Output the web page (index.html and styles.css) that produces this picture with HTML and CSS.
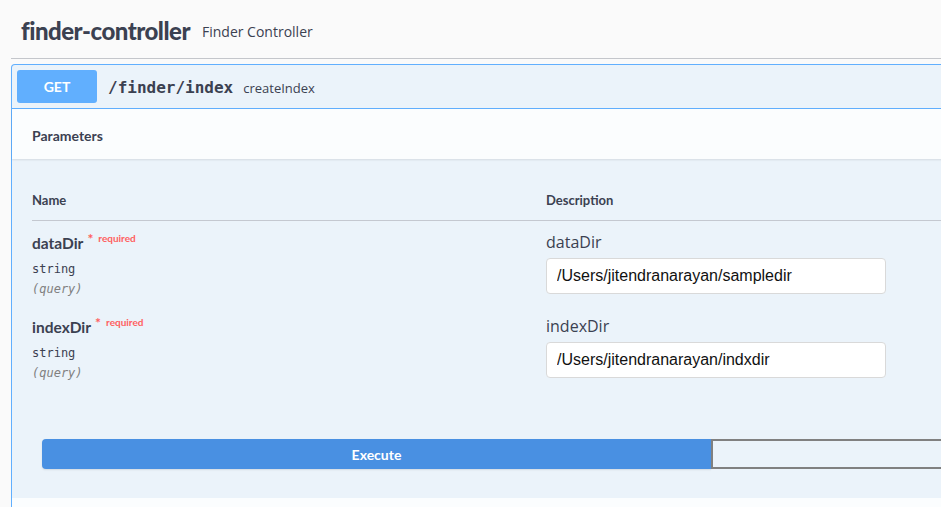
FILE: index.html
```html
<!DOCTYPE html>
<html>
<head>
<meta charset="utf-8">
<link rel="stylesheet" href="styles.css">
</head>
<body>
<div class="page">
  <div class="tag">
    <h4 class="tag-title">finder-controller</h4>
    <span class="tag-desc">Finder Controller</span>
  </div>
  <div class="opblock">
    <div class="summary">
      <span class="method">GET</span>
      <span class="path">/finder/index</span>
      <span class="op-desc">createIndex</span>
    </div>
    <div class="section-header">
      <h4 class="section-title">Parameters</h4>
    </div>
    <div class="params">
      <div class="params-head">
        <div class="col-name">Name</div>
        <div class="col-desc">Description</div>
      </div>
      <div class="param-row">
        <div class="col-name">
          <div class="param-name">dataDir<span class="req"><span class="star">*</span>required</span></div>
          <div class="param-type">string</div>
          <div class="param-in">(query)</div>
        </div>
        <div class="col-desc">
          <div class="param-label">dataDir</div>
          <input class="param-input" type="text" value="/Users/jitendranarayan/sampledir">
        </div>
      </div>
      <div class="param-row">
        <div class="col-name">
          <div class="param-name">indexDir<span class="req"><span class="star">*</span>required</span></div>
          <div class="param-type">string</div>
          <div class="param-in">(query)</div>
        </div>
        <div class="col-desc">
          <div class="param-label">indexDir</div>
          <input class="param-input" type="text" value="/Users/jitendranarayan/indxdir">
        </div>
      </div>
    </div>
    <div class="execute-wrapper">
      <button class="btn-execute">Execute</button>
      <button class="btn-clear"></button>
    </div>
    <div class="section-header next"></div>
  </div>
</div>
</body>
</html>
```

FILE: styles.css
```css
html, body {
  margin: 0;
  padding: 0;
  overflow: hidden;
  background: #fafafa;
}
body {
  width: 941px;
  height: 507px;
  font-family: "Open Sans", sans-serif;
  color: #3b4151;
}
.page {
  width: 1420px;
  padding-left: 11px;
}
.tag {
  display: flex;
  align-items: center;
  height: 58px;
  border-bottom: 1px solid #c4c6cb;
  padding-left: 10px;
  box-sizing: content-box;
  margin-bottom: 5px;
}
.tag-title {
  margin: 0;
  font-family: "Lato", sans-serif;
  font-weight: 900;
  font-size: 24px;
  letter-spacing: -0.5px;
  line-height: 30px;
  margin-top: 4px;
  color: #3b4151;
}
.tag-desc {
  font-size: 14px;
  margin-left: 12px;
  margin-top: 4px;
}
.opblock {
  border: 1px solid #61affe;
  border-radius: 4px;
  background: #ebf3fa;
  border-bottom: none;
}
.summary {
  display: flex;
  align-items: center;
  padding: 5px;
  height: 33px;
  border-bottom: 1px solid #61affe;
}
.method {
  width: 80px;
  height: 33px;
  line-height: 33px;
  text-align: center;
  background: #61affe;
  color: #fff;
  border-radius: 3px;
  font-family: "Lato", sans-serif;
  font-weight: 700;
  font-size: 14px;
}
.path {
  font-family: "DejaVu Sans Mono", monospace;
  font-weight: 600;
  font-size: 16px;
  margin-left: 11px;
  margin-top: 2px;
  color: #3b4151;
}
.op-desc {
  font-size: 13px;
  margin-left: 10px;
  margin-top: 2px;
}
.section-header {
  height: 50px;
  display: flex;
  align-items: center;
  padding: 0 20px;
  background: rgba(255, 255, 255, 0.8);
  box-shadow: 0 1px 2px rgba(0, 0, 0, 0.1);
}
.section-title {
  margin: 0;
  font-family: "Lato", sans-serif;
  font-size: 14px;
  font-weight: 700;
  margin-top: 2px;
}
.params {
  padding: 20px 0 0 20px;
}
.params-head {
  display: flex;
  height: 41px;
  align-items: center;
  border-bottom: 1px solid #c4c8d0;
  font-family: "Lato", sans-serif;
  font-weight: 700;
  font-size: 13px;
}
.col-name {
  width: 514px;
  flex: none;
}
.col-desc {
  flex: 1;
}
.param-row {
  display: flex;
  height: 84px;
  padding-top: 11px;
  box-sizing: border-box;
}
.param-row .col-name {
  padding-top: 1px;
}
.param-name {
  font-family: "Lato", sans-serif;
  font-weight: 700;
  font-size: 15.5px;
  line-height: 20px;
  height: 20px;
}
.req {
  position: relative;
  top: -7px;
  font-size: 10px;
  color: #ff6060;
  font-weight: 700;
  margin-left: 4px;
}
.star {
  font-size: 14px;
  margin-right: 5px;
  position: relative;
  top: 2px;
}
.param-type {
  font-family: "DejaVu Sans Mono", monospace;
  font-size: 12px;
  line-height: 20px;
  margin-top: 6px;
}
.param-in {
  font-family: "DejaVu Sans Mono", monospace;
  font-size: 12px;
  font-style: italic;
  color: #808080;
  line-height: 20px;
}
.param-label {
  font-size: 16px;
  line-height: 20px;
  height: 20px;
}
.param-input {
  display: block;
  margin-top: 6px;
  width: 340px;
  height: 36px;
  box-sizing: border-box;
  border: 1px solid #d9d9d9;
  border-radius: 4px;
  background: #fff;
  padding: 0 10px;
  font-family: "Liberation Sans", Arial, sans-serif;
  font-size: 16px;
  color: #111;
  outline: none;
}
.execute-wrapper {
  display: flex;
  padding: 50px 30px 29px 30px;
}
.btn-execute {
  width: 669px;
  height: 30px;
  border: none;
  border-radius: 4px 0 0 4px;
  background: #4990e2;
  color: #fff;
  font-family: "Lato", sans-serif;
  font-weight: 700;
  font-size: 14px;
  box-shadow: 0 1px 2px rgba(0, 0, 0, 0.1);
  padding: 0;
}
.btn-clear {
  width: 669px;
  height: 30px;
  box-sizing: border-box;
  border: 2px solid #808080;
  border-radius: 0 4px 4px 0;
  background: transparent;
  padding: 0;
}
.section-header.next {
  box-shadow: none;
}
```
